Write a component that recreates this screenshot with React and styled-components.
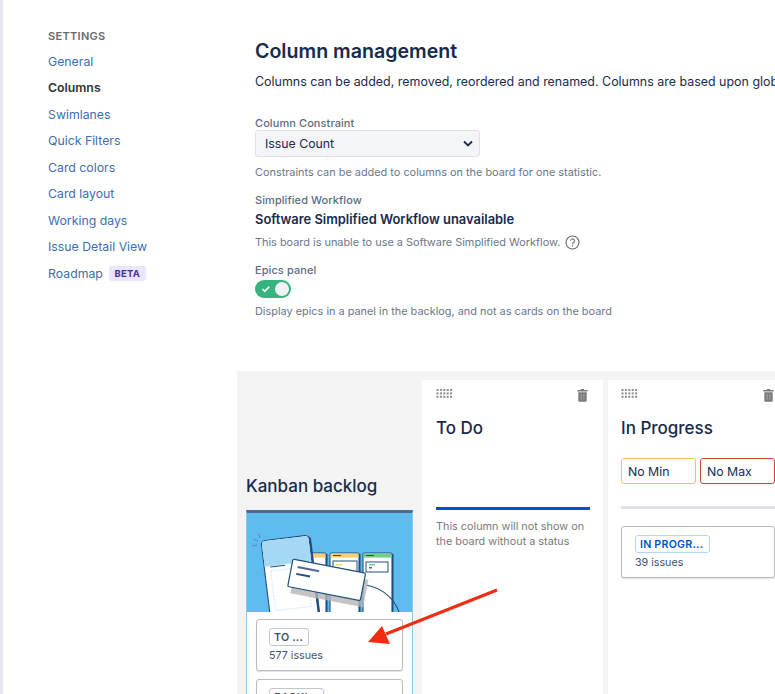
import React from 'react';
import styled, { createGlobalStyle } from 'styled-components';

const GlobalStyle = createGlobalStyle`
  html, body {
    margin: 0;
    padding: 0;
    background: #ffffff;
    font-family: Inter, "Noto Sans", sans-serif;
  }
`;

const Page = styled.div`
  position: relative;
  display: flex;
  width: 775px;
  height: 694px;
  overflow: hidden;
  border-left: 3px solid #e6e7ef;
  box-sizing: border-box;
`;

const Sidebar = styled.nav`
  flex: 0 0 234px;
  box-sizing: border-box;
  padding: 30px 0 0 45px;
`;

const SidebarTitle = styled.div`
  font-size: 11px;
  line-height: 13px;
  font-weight: 600;
  letter-spacing: 0.3px;
  color: #6b6b6b;
  margin-bottom: 5px;
`;

const NavItem = styled.div`
  display: flex;
  align-items: center;
  height: 26.5px;
  font-size: 12.3px;
  font-weight: ${(p) => (p.$active ? 600 : 400)};
  color: ${(p) => (p.$active ? '#333333' : '#3d6fb0')};
`;

const Lozenge = styled.span`
  margin-left: 6px;
  padding: 0 5.500px;
  height: 15px;
  line-height: 15px;
  border-radius: 3px;
  background: #eae6ff;
  color: #403294;
  font-size: 9.500px;
  font-weight: 700;
  letter-spacing: 0.3px;
`;

const Main = styled.main`
  flex: 1;
  min-width: 0;
`;

const Settings = styled.section`
  box-sizing: border-box;
  height: 371px;
  padding: 39px 0 0 18px;
`;

const Heading = styled.h1`
  margin: 0;
  font-size: 19.600px;
  line-height: 24px;
  font-weight: 600;
  color: #172b4d;
`;

const Intro = styled.p`
  margin: 10px 0 0;
  font-size: 12.450px;
  line-height: 18px;
  color: #172b4d;
  white-space: nowrap;
`;

const Label = styled.div`
  margin-top: ${(p) => p.$top || 0}px;
  font-size: 11px;
  line-height: 14px;
  font-weight: 500;
  letter-spacing: 0.08px;
  color: #5e6c84;
`;

const SelectBox = styled.div`
  display: flex;
  align-items: center;
  justify-content: space-between;
  box-sizing: border-box;
  width: 225px;
  height: 27px;
  padding: 0 6px 0 9px;
  background: #f4f5f7;
  border: 1px solid #dfe1e6;
  border-radius: 3px;
  font-size: 12.300px;
  color: #172b4d;
`;

const Help = styled.div`
  display: flex;
  align-items: center;
  gap: 5px;
  margin-top: ${(p) => p.$top || 0}px;
  font-size: 10.900px;
  line-height: 16px;
  color: #6b778c;
`;

const Strong = styled.div`
  margin-top: 5px;
  font-size: 12.900px;
  line-height: 16px;
  font-weight: 600;
  color: #172b4d;
`;

const Toggle = styled.div`
  display: flex;
  align-items: center;
  justify-content: space-between;
  box-sizing: border-box;
  width: 36px;
  height: 18px;
  margin-top: 3px;
  padding: 0 2px 0 6px;
  border-radius: 9px;
  background: #36b37e;
`;

const Knob = styled.span`
  width: 14px;
  height: 14px;
  border-radius: 50%;
  background: #f1f2f4;
`;

const Board = styled.section`
  display: flex;
  gap: 5px;
  height: 323px;
  box-sizing: border-box;
  padding: 9px 0 0 0;
  background: #f4f4f4;
`;

const BacklogColumn = styled.div`
  flex: 0 0 180px;
  box-sizing: border-box;
  padding: 94px 0 0 9px;
`;

const BacklogTitle = styled.h2`
  margin: 0 0 12px;
  font-size: 17px;
  line-height: 24px;
  font-weight: 500;
  color: #172b4d;
`;

const BacklogPanel = styled.div`
  width: 167px;
  box-sizing: border-box;
  height: 200px;
  background: #ffffff;
  border-top: 3px solid #4a6c92;
  border-left: 1px solid #8fc9ee;
  border-right: 1px solid #8fc9ee;
`;

const Illustration = styled.svg`
  display: block;
  width: 165px;
  height: 99px;
`;

const CardStack = styled.div`
  display: flex;
  flex-direction: column;
  gap: 8px;
  padding: 7px 9px 0;
`;

const Column = styled.div`
  flex: 0 0 181px;
  min-width: 0;
  box-sizing: border-box;
  padding: 8px 15px 0 ${(p) => p.$inset}px;
  background: #ffffff;
`;

const ColumnTop = styled.div`
  display: flex;
  align-items: flex-start;
  justify-content: space-between;
  height: 18px;
`;

const ColumnTitle = styled.h2`
  margin: 10px 0 0;
  font-size: 17px;
  line-height: 24px;
  font-weight: 500;
  color: #172b4d;
`;

const Spacer = styled.div`
  height: 67px;
`;

const Rule = styled.div`
  height: 3px;
  width: 154px;
  background: ${(p) => p.$color};
`;

const Note = styled.p`
  margin: 9px 0 0;
  font-size: 10.850px;
  line-height: 15px;
  color: #7a7a7a;
`;

const Limits = styled.div`
  display: flex;
  gap: 4px;
  margin-top: 18px;
  margin-bottom: 22px;
`;

const LimitInput = styled.div`
  flex: 0 0 75px;
  box-sizing: border-box;
  height: 26px;
  padding-left: 6px;
  line-height: 25px;
  font-size: 12.300px;
  color: #172b4d;
  border: 1px solid ${(p) => p.$color};
  border-radius: 3px;
`;

const StatusCard = styled.div`
  box-sizing: border-box;
  width: ${(p) => p.$width || 147}px;
  height: 52px;
  padding: 8px ${(p) => p.$pad || 12}px;
  margin-top: ${(p) => p.$top || 0}px;
  background: #ffffff;
  border: 1px solid #bcbcbc;
  border-radius: 3px;
  box-shadow: 0 1px 1px rgba(0, 0, 0, 0.12);
`;

const StatusTag = styled.div`
  box-sizing: border-box;
  width: ${(p) => p.$width}px;
  height: 18px;
  padding-left: 4px;
  line-height: 17px;
  font-size: 10.700px;
  font-weight: 600;
  letter-spacing: 0.2px;
  color: ${(p) => (p.$blue ? '#0052cc' : '#42526e')};
  border: 1px solid ${(p) => (p.$blue ? '#b3d4ff' : '#c1c7d0')};
  border-radius: 3px;
  overflow: hidden;
  white-space: nowrap;
`;

const IssueCount = styled.div`
  margin-top: 3px;
  font-size: 10.700px;
  line-height: 14px;
  color: #42526e;
`;

const Arrow = styled.svg`
  position: absolute;
  left: 361px;
  top: 586px;
  width: 136px;
  height: 60px;
`;

function GripIcon() {
  const dots = [];
  for (let y = 0; y < 3; y += 1) {
    for (let x = 0; x < 5; x += 1) {
      dots.push(<rect key={`${x}-${y}`} x={x * 3.4} y={y * 3.4} width="2" height="2" fill="#8c8c8c" />);
    }
  }
  return (
    <svg width="17" height="9" viewBox="0 0 16 9" style={{ display: 'block', marginTop: 1 }}>
      {dots}
    </svg>
  );
}

function TrashIcon() {
  return (
    <svg width="11" height="13" viewBox="0 0 11 14" style={{ display: 'block', marginTop: 1 }}>
      <path d="M4 0h3l.5 1H11v1.600H0V1h3.500z" fill="#7a7a7a" />
      <path d="M1 3.500h9V12.500a1.300 1.300 0 0 1-1.300 1.300H2.300A1.300 1.300 0 0 1 1 12.500z" fill="#7a7a7a" />
      <path d="M3.500 5.500h1v6h-1zM6.500 5.500h1v6h-1z" fill="#a8a8a8" />
    </svg>
  );
}

function MiniColumn({ x, head, children }) {
  return (
    <g>
      <rect x={x + 1.5} y="41" width="29" height="70" fill="#1e4f7f" />
      <rect x={x} y="40" width="29" height="70" rx="1.500" fill="#ffffff" stroke="#1e4f7f" strokeWidth="1.100" />
      <rect x={x + 0.6} y="40.600" width="27.800" height="4" fill={head} />
      <path d={`M${x + 3} 42.500h8`} stroke="#1e4f7f" strokeWidth="1" />
      {children}
    </g>
  );
}

function BoardArt() {
  return (
    <Illustration viewBox="0 0 165 99">
      <rect width="165" height="99" fill="#5fbcee" />
      <path d="M7 26l4 2M12 21l1 4M5 33l5-1" stroke="#4a8fbf" strokeWidth="1" fill="none" />
      <MiniColumn x={50} head="#f7cf72" />
      <MiniColumn x={83} head="#f7cf72">
        <rect x="86" y="48" width="24" height="15" fill="#ffffff" stroke="#1e4f7f" />
        <rect x="89" y="51" width="6" height="1.500" fill="#f7cf72" />
      </MiniColumn>
      <MiniColumn x={116} head="#6fd08c">
        <rect x="119" y="49" width="22" height="10" fill="#ffffff" stroke="#1e4f7f" />
        <rect x="122" y="51" width="6" height="1.500" fill="#6fd08c" />
        <rect x="122" y="54" width="3" height="1.500" fill="#4a6c92" />
      </MiniColumn>
      <path d="M119 72c16 3 28 13 33 27" stroke="#1e4f7f" fill="none" strokeWidth="1.100" />
      <g transform="rotate(-7 14 28)">
        <rect x="16" y="29" width="48" height="90" rx="4" fill="#1e4f7f" />
        <rect x="14" y="28" width="48" height="90" rx="4" fill="#ffffff" stroke="#1e4f7f" strokeWidth="1.100" />
        <path d="M14.500 32a3.500 3.500 0 0 1 3.500-3.500h40a3.500 3.500 0 0 1 3.500 3.500v22H14.500z" fill="#a5d8f5" />
        <path d="M20 55h15" stroke="#1e4f7f" fill="none" />
        <path d="M20 59h36v40H20z" stroke="#cfe9f8" fill="none" strokeDasharray="2 1" />
      </g>
      <g transform="rotate(11 46 46)">
        <rect x="50" y="52" width="74" height="28" fill="#b5b5b5" opacity="0.8" />
        <rect x="46" y="46" width="74" height="28" rx="1.500" fill="#ffffff" stroke="#1e4f7f" strokeWidth="1.200" />
        <path d="M52 53h22" stroke="#4a6c92" strokeWidth="2" />
        <path d="M52 60h14" stroke="#1e4f7f" strokeWidth="2" />
      </g>
    </Illustration>
  );
}

export default function App() {
  const nav = ['General', 'Columns', 'Swimlanes', 'Quick Filters', 'Card colors', 'Card layout', 'Working days', 'Issue Detail View'];

  return (
    <>
      <GlobalStyle />
      <Page>
        <Sidebar>
          <SidebarTitle>SETTINGS</SidebarTitle>
          {nav.map((item) => (
            <NavItem key={item} $active={item === 'Columns'}>
              {item}
            </NavItem>
          ))}
          <NavItem>
            Roadmap
            <Lozenge>BETA</Lozenge>
          </NavItem>
        </Sidebar>
        <Main>
          <Settings>
            <Heading>Column management</Heading>
            <Intro>Columns can be added, removed, reordered and renamed. Columns are based upon global statuses.</Intro>
            <Label $top={25}>Column Constraint</Label>
            <SelectBox>
              Issue Count
              <svg width="10" height="7" viewBox="0 0 10 7">
                <path d="M1 1.500l4 4 4-4" fill="none" stroke="#172b4d" strokeWidth="1.800" />
              </svg>
            </SelectBox>
            <Help $top={7}>Constraints can be added to columns on the board for one statistic.</Help>
            <Label $top={13}>Simplified Workflow</Label>
            <Strong>Software Simplified Workflow unavailable</Strong>
            <Help $top={6}>
              This board is unable to use a Software Simplified Workflow.
              <svg width="15" height="15" viewBox="0 0 15 15">
                <circle cx="7.500" cy="7.500" r="6.500" fill="none" stroke="#6b6b6b" strokeWidth="1.100" />
                <path d="M5.500 5.800a2 2 0 1 1 3 1.800c-.7.400-1 .8-1 1.600" fill="none" stroke="#6b6b6b" strokeWidth="1.100" />
                <circle cx="7.500" cy="11" r=".8" fill="#6b6b6b" />
              </svg>
            </Help>
            <Label $top={13}>Epics panel</Label>
            <Toggle>
              <svg width="10" height="8" viewBox="0 0 10 8">
                <path d="M1.500 4l2.300 2.300 4.500-4.600" fill="none" stroke="#ffffff" strokeWidth="1.700" />
              </svg>
              <Knob />
            </Toggle>
            <Help $top={5}>Display epics in a panel in the backlog, and not as cards on the board</Help>
          </Settings>
          <Board>
            <BacklogColumn>
              <BacklogTitle>Kanban backlog</BacklogTitle>
              <BacklogPanel>
                <BoardArt />
                <CardStack>
                  <StatusCard>
                    <StatusTag $width={40}>TO ...</StatusTag>
                    <IssueCount>577 issues</IssueCount>
                  </StatusCard>
                  <StatusCard>
                    <StatusTag $width={55}>BACKL...</StatusTag>
                    <IssueCount>12 issues</IssueCount>
                  </StatusCard>
                </CardStack>
              </BacklogPanel>
            </BacklogColumn>
            <Column $inset={14}>
              <ColumnTop>
                <GripIcon />
                <TrashIcon />
              </ColumnTop>
              <ColumnTitle>To Do</ColumnTitle>
              <Spacer />
              <Rule $color="#0052cc" />
              <Note>This column will not show on the board without a status</Note>
            </Column>
            <Column $inset={13}>
              <ColumnTop>
                <GripIcon />
                <TrashIcon />
              </ColumnTop>
              <ColumnTitle>In Progress</ColumnTitle>
              <Limits>
                <LimitInput $color="#f5c356">No Min</LimitInput>
                <LimitInput $color="#d04437">No Max</LimitInput>
              </Limits>
              <Rule $color="#dfe1e6" />
              <StatusCard $width={154} $top={17} $pad={13}>
                <StatusTag $blue $width={75}>IN PROGR...</StatusTag>
                <IssueCount>39 issues</IssueCount>
              </StatusCard>
            </Column>
          </Board>
        </Main>
        <Arrow viewBox="0 0 136 60">
          <path d="M133 4L22 48" stroke="#f22c12" strokeWidth="3" fill="none" />
          <path d="M4 56l14-16 8 18z" fill="#f22c12" />
        </Arrow>
      </Page>
    </>
  );
}
